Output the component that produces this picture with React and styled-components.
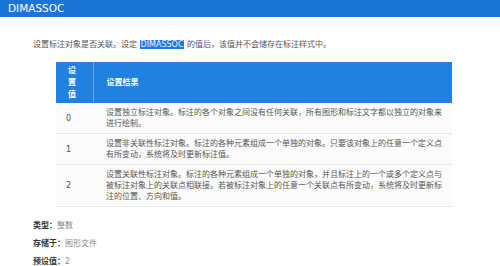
import React from "react";
import styled, { createGlobalStyle } from "styled-components";

const rows = [
  {
    value: "0",
    text: "设置独立标注对象。标注的各个对象之间没有任何关联，所有图形和标注文字都以独立的对象来进行绘制。",
  },
  {
    value: "1",
    text: "设置非关联性标注对象。标注的各种元素组成一个单独的对象。只要该对象上的任意一个定义点有所变动，系统将及时更新标注值。",
  },
  {
    value: "2",
    text: "设置关联性标注对象。标注的各种元素组成一个单独的对象，并且标注上的一个或多个定义点与被标注对象上的关联点相联接。若被标注对象上的任意一个关联点有所变动，系统将及时更新标注的位置、方向和值。",
  },
];

const props = [
  { label: "类型：", value: "整数" },
  { label: "存储于：", value: "图形文件" },
  { label: "预设值：", value: "2" },
];

const App = () => {
  return (
    <>
      <GlobalStyle />
      <TitleBar>DIMASSOC</TitleBar>
      <Content>
        <Intro>
          设置标注对象是否关联。设定 <Highlight>DIMASSOC</Highlight>{" "}
          的值后，该值并不会储存在标注样式中。
        </Intro>
        <Table>
          <colgroup>
            <col style={{ width: "37px" }} />
            <col />
          </colgroup>
          <thead>
            <tr>
              <HeadCell $first>设置值</HeadCell>
              <HeadCell>设置结果</HeadCell>
            </tr>
          </thead>
          <tbody>
            {rows.map((r) => (
              <Row key={r.value}>
                <ValueCell>{r.value}</ValueCell>
                <TextCell>{r.text}</TextCell>
              </Row>
            ))}
          </tbody>
        </Table>
        <Props>
          {props.map((p) => (
            <Prop key={p.label}>
              <b>{p.label}</b>
              <span>{p.value}</span>
            </Prop>
          ))}
        </Props>
      </Content>
    </>
  );
};

const GlobalStyle = createGlobalStyle`
  body {
    margin: 0;
    background: #ffffff;
    font-family: "DejaVu Sans", "Noto Sans CJK SC", sans-serif;
  }
`;

const TitleBar = styled.div`
  height: 17px;
  line-height: 17px;
  padding-left: 8px;
  background: #1a74d6;
  color: #ffffff;
  font-size: 10.5px;
`;

const Content = styled.div`
  padding: 22px 0 0 33px;
`;

const Intro = styled.p`
  margin: 0;
  font-size: 8px;
  line-height: 12px;
  color: #555;
`;

const Highlight = styled.span`
  background: #1e7bdc;
  color: #e8f2ff;
  padding: 0 1px;
`;

const Table = styled.table`
  margin: 11px 0 0 23px;
  width: 396px;
  table-layout: fixed;
  border-collapse: collapse;
  font-size: 8px;
`;

const HeadCell = styled.th`
  background: #2181e0;
  color: #ffffff;
  font-weight: bold;
  text-align: left;
  line-height: 12px;
  padding: ${(p) => (p.$first ? "3px 10px 2px 12px" : "3px 8px 2px 13px")};
  border-right: ${(p) => (p.$first ? "1px solid #6aaaf0" : "none")};
`;

const Row = styled.tr`
  background: #fbfbfb;
  border-bottom: 1px solid #e9e9e9;
`;

const ValueCell = styled.td`
  padding: 4px 0 4px 10px;
  line-height: 11px;
  color: #555;
  vertical-align: middle;
`;

const TextCell = styled.td`
  padding: 4px 8px 4px 13px;
  line-height: 11px;
  color: #555;
`;

const Props = styled.div`
  display: flex;
  flex-direction: column;
  gap: 6px;
  margin-top: 13px;
`;

const Prop = styled.div`
  font-size: 8px;
  line-height: 12px;
  b {
    color: #333;
  }
  span {
    color: #888;
  }
`;

export default App;
